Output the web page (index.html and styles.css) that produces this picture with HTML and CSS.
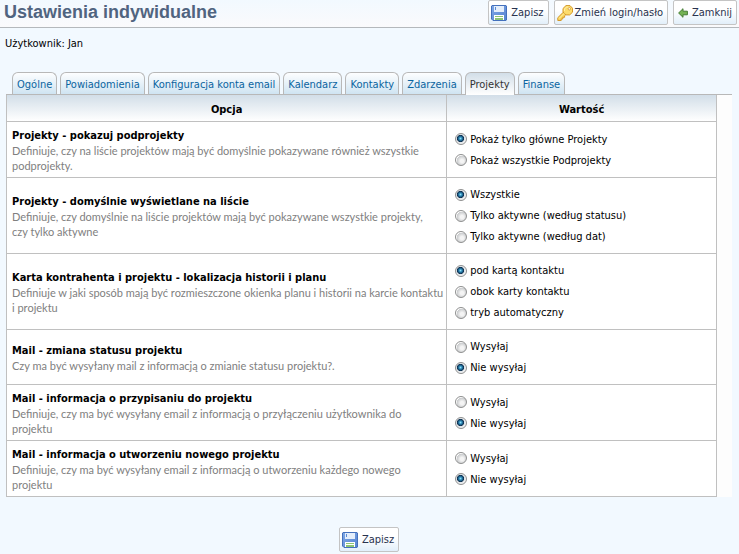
FILE: index.html
```html
<!DOCTYPE html>
<html lang="pl">
<head>
<meta charset="utf-8">
<title>Ustawienia indywidualne</title>
<link rel="stylesheet" href="styles.css">
</head>
<body>
<svg width="0" height="0" class="defs" aria-hidden="true">
  <defs>
    <linearGradient id="disk-body" x1="0" y1="0" x2="1" y2="1">
      <stop offset="0" stop-color="#7fa8e6"/><stop offset="1" stop-color="#5482d0"/>
    </linearGradient>
    <symbol id="disk" viewBox="0 0 16 16">
      <path d="M1 .5h14l.5.5v14l-.5.5H2L.5 14V1z" fill="url(#disk-body)" stroke="#4470bc"/>
      <path d="M3 1h10v6H3z" fill="#e4eefb"/>
      <path d="M4 2h1v3H4z" fill="#5c8ad4"/>
      <path d="M3 10h10v5H3z" fill="#fff"/>
      <path d="M4 11h8v1H4zM4 13h8v2H4z" fill="#8cc474"/>
    </symbol>
    <symbol id="key" viewBox="0 0 16 16">
      <path d="M7 6.500.8 12.700v2.800h3.400V14h1.600v-1.700h1.800v-1.500L9.500 9z" fill="#fbd65a" stroke="#d4982a" stroke-linejoin="round"/>
      <path d="M6 3.500 9 .6h4l2.500 2.600v4l-2.800 2.700H9L6 7z" fill="#fcdc6c" stroke="#d4982a" stroke-linejoin="round"/>
      <path d="M7.500 6V4l2-2h2M2 13.500l5-5" fill="none" stroke="#fff0a8"/>
      <circle cx="12.300" cy="3.800" r="1.200" fill="#fff" stroke="#d4982a" stroke-width=".8"/>
    </symbol>
    <symbol id="arrow" viewBox="0 0 10 10">
      <path d="M.6 5 5 .7v2.500h4.400v3.600H5v2.500z" fill="#74b254" stroke="#447c34" stroke-linejoin="round"/>
    </symbol>
  </defs>
</svg>
<header class="topbar">
  <h1>Ustawienia indywidualne</h1>
  <div class="actions">
    <button type="submit" form="settings" class="btn"><svg class="icon"><use href="#disk"/></svg>Zapisz</button>
    <button type="button" class="btn btn-key"><svg class="icon"><use href="#key"/></svg>Zmień login/hasło</button>
    <button type="button" class="btn"><svg class="icon-small"><use href="#arrow"/></svg>Zamknij</button>
  </div>
</header>
<p class="user">Użytkownik: Jan</p>
<form id="settings" class="settings">
  <nav class="tabs">
    <a href="#">Ogólne</a>
    <a href="#">Powiadomienia</a>
    <a href="#">Konfiguracja konta email</a>
    <a href="#">Kalendarz</a>
    <a href="#">Kontakty</a>
    <a href="#">Zdarzenia</a>
    <a href="#" class="active" aria-current="page">Projekty</a>
    <a href="#">Finanse</a>
  </nav>
  <div class="panel">
    <table>
      <thead>
        <tr><th class="col-option">Opcja</th><th>Wartość</th></tr>
      </thead>
      <tbody>
        <tr>
          <td><h2>Projekty - pokazuj podprojekty</h2><p>Definiuje, czy na liście projektów mają być domyślnie pokazywane również wszystkie podprojekty.</p></td>
          <td class="values">
            <label><input type="radio" name="sub" checked>Pokaż tylko główne Projekty</label>
            <label><input type="radio" name="sub">Pokaż wszystkie Podprojekty</label>
          </td>
        </tr>
        <tr>
          <td><h2>Projekty - domyślnie wyświetlane na liście</h2><p>Definiuje, czy domyślnie na liście projektów mają być pokazywane wszystkie projekty, czy&nbsp;tylko aktywne</p></td>
          <td class="values">
            <label><input type="radio" name="list" checked>Wszystkie</label>
            <label><input type="radio" name="list">Tylko aktywne (według statusu)</label>
            <label><input type="radio" name="list">Tylko aktywne (według dat)</label>
          </td>
        </tr>
        <tr>
          <td><h2>Karta kontrahenta i projektu - lokalizacja historii i planu</h2><p>Definiuje w jaki sposób mają być rozmieszczone okienka planu i historii na karcie kontaktu i&nbsp;projektu</p></td>
          <td class="values">
            <label><input type="radio" name="card" checked>pod kartą kontaktu</label>
            <label><input type="radio" name="card">obok karty kontaktu</label>
            <label><input type="radio" name="card">tryb automatyczny</label>
          </td>
        </tr>
        <tr>
          <td><h2>Mail - zmiana statusu projektu</h2><p>Czy ma być wysyłany mail z informacją o zmianie statusu projektu?.</p></td>
          <td class="values">
            <label><input type="radio" name="status">Wysyłaj</label>
            <label><input type="radio" name="status" checked>Nie wysyłaj</label>
          </td>
        </tr>
        <tr>
          <td><h2>Mail - informacja o przypisaniu do projektu</h2><p>Definiuje, czy ma być wysyłany email z informacją o przyłączeniu użytkownika do<br>projektu</p></td>
          <td class="values">
            <label><input type="radio" name="assign">Wysyłaj</label>
            <label><input type="radio" name="assign" checked>Nie wysyłaj</label>
          </td>
        </tr>
        <tr>
          <td><h2>Mail - informacja o utworzeniu nowego projektu</h2><p>Definiuje, czy ma być wysyłany email z informacją o utworzeniu każdego nowego<br>projektu</p></td>
          <td class="values">
            <label><input type="radio" name="create">Wysyłaj</label>
            <label><input type="radio" name="create" checked>Nie wysyłaj</label>
          </td>
        </tr>
      </tbody>
    </table>
  </div>
  <div class="submit">
    <button type="submit" class="btn"><svg class="icon"><use href="#disk"/></svg>Zapisz</button>
  </div>
</form>
</body>
</html>
```
FILE: styles.css
```css
* { box-sizing: border-box; }

body {
  margin: 0;
  background: #f2f9ff;
  color: #000;
  font: 11px/15px Tahoma, "DejaVu Sans Condensed", "Noto Sans", sans-serif;
}

h1, h2, p { margin: 0; }

.defs { position: absolute; }

.topbar {
  display: flex;
  justify-content: space-between;
  align-items: flex-start;
  height: 28px;
  padding: 0 2px 0 4px;
  border-bottom: 1px solid #b4b8bc;
  background: linear-gradient(#f2f9ff, #fafafc);
}

h1 {
  color: #506480;
  font: bold 18px/24px "Liberation Sans", Arial, sans-serif;
}

.actions { display: flex; gap: 5px; }

.btn {
  display: inline-flex;
  align-items: center;
  gap: 4px;
  height: 25px;
  padding: 0 4px 0 2px;
  border: 1px solid #c4c4c4;
  border-radius: 2px;
  background: linear-gradient(#fff 40%, #e2effa);
  color: #28324e;
  font: inherit;
  line-height: 17px;
  white-space: nowrap;
}

.btn-key { gap: 2px; }

.icon { width: 16px; height: 16px; }
.icon-small { width: 10px; height: 10px; margin-left: 2px; }

.user { padding: 8px 5px 0; }

.settings { padding: 21px 7px 0 6px; }

.tabs {
  display: flex;
  gap: 3px;
  padding-left: 6px;
  border-bottom: 1px solid #b8b8b8;
}

.tabs a {
  height: 22px;
  padding: 0 4px;
  border: 1px solid #b8b8b8;
  border-bottom: 0;
  border-radius: 6px 6px 0 0;
  background: linear-gradient(#fdfeff, #cfe4f2);
  color: #0a64a0;
  line-height: 23px;
  text-decoration: none;
  white-space: nowrap;
}

.tabs .active {
  margin-bottom: -1px;
  height: 23px;
  background: linear-gradient(#d2dee8, #fff);
  color: #333;
}

.panel {
  padding-right: 15px;
  background: #fdfdfd;
}

table {
  width: 100%;
  table-layout: fixed;
  border-collapse: separate;
  border-spacing: 0;
  border-left: 1px solid #c0c0c0;
  background: #fff;
}

th, td {
  border-right: 1px solid #c0c0c0;
  border-bottom: 1px solid #c0c0c0;
}

th {
  height: 27px;
  padding: 2px 0 0;
  background: linear-gradient(#d2dee8, #fff);
}

.col-option { width: 62%; }

td { padding: 6px 0 4px 5px; }

.values { padding: 6px 8px; }

h2 { font: inherit; font-weight: bold; }

td p {
  color: #808080;
  font-family: Tahoma, Lato, sans-serif;
}

label {
  display: flex;
  align-items: center;
  gap: 3px;
  height: 21px;
}

input {
  appearance: none;
  width: 12px;
  height: 12px;
  margin: 0;
  border: 1px solid #8e8f8f;
  border-radius: 50%;
  background: radial-gradient(circle at 60% 60%, #f4f4f4 20%, #c8cacc 60%, #fff 66%);
}

input:checked {
  background: radial-gradient(circle at 45% 45%, #8fe0fa 0, #2a86b4 20%, #0c2c4c 42%, #dfe4e8 50%, #f4f4f4 70%);
}

.submit {
  display: flex;
  justify-content: center;
  padding-top: 30px;
}
```
